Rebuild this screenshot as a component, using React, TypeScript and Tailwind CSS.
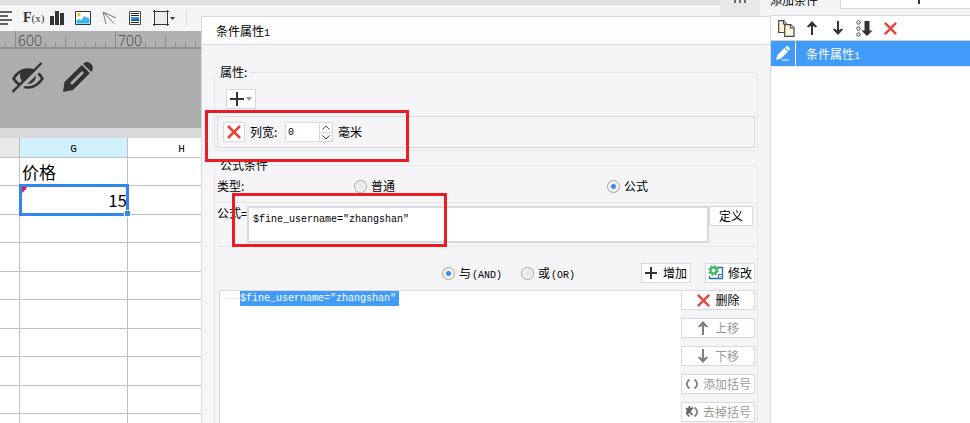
import React, { useState } from 'react';

const CJK = "font-['Noto_Sans_CJK_SC',sans-serif]";
const MONO = "font-['Liberation_Mono',monospace] text-[10px]";

function Cross({ size = 16 }: { size?: number }) {
  return (
    <svg width={size} height={size} viewBox="0 0 16 16" fill="none" stroke="#e8443a" strokeWidth="2.6" aria-hidden="true">
      <path d="M2 2 14 14M14 2 2 14" />
    </svg>
  );
}

function Plus() {
  return (
    <svg width="14" height="14" viewBox="0 0 14 14" stroke="#333" strokeWidth="2" aria-hidden="true">
      <path d="M7 0V14M0 7H14" />
    </svg>
  );
}

function Arrow({ down = false, color = '#333' }: { down?: boolean; color?: string }) {
  return (
    <svg width="12" height="14" viewBox="0 0 12 14" aria-hidden="true" className={down ? 'rotate-180' : ''}>
      <path d="M6 2V14" stroke={color} strokeWidth="2" />
      <path d="M6 0 11 5.500 10 6.500 6 4.500 2 6.500 1 5.500Z" fill={color} />
    </svg>
  );
}

function EditIcon() {
  return (
    <svg width="16" height="16" viewBox="0 0 16 16" fill="none" aria-hidden="true" className="shrink-0">
      <path d="M9 2.500H14.500V13.500H1.500V11" stroke="#1a6fb5" strokeWidth="1.300" />
      <path d="M10.500 9.500h4v4h-4z" fill="#fff" stroke="#1a6fb5" />
      <path d="M12 12.500 13.500 11" stroke="#1a6fb5" />
      <circle cx="5.500" cy="5.500" r="3" fill="#f5f5f7" stroke="#35b558" strokeWidth="2" />
      <circle cx="5.500" cy="5.500" r="4.600" stroke="#35b558" strokeWidth="1.500" strokeDasharray="1.900 1.710" />
    </svg>
  );
}

function Brackets({ struck = false }: { struck?: boolean }) {
  return (
    <svg width="14" height="12" viewBox="0 0 14 12" fill="none" stroke="#808080" strokeWidth="1.800" aria-hidden="true" className="shrink-0">
      <path d="M4.500 1.500C1 4 1 8 4.500 10.500M9.500 1.500C13 4 13 8 9.500 10.500" />
      {struck && <path d="M1 2 7.500 9M8 1.500 1.500 8M4.500 0V5" stroke="#606060" />}
    </svg>
  );
}

function DesignerToolbar() {
  return (
    <div className="flex h-[26px] shrink-0 items-center gap-[11px] bg-[#f5f5f7]">
      <svg width="12" height="15" viewBox="0 0 12 15" stroke="#333" strokeWidth="1.6" className="shrink-0">
        <path d="M0 1H12M0 5H8M0 9H12M0 13H8" />
      </svg>
      <span className="w-4 shrink-0 font-['Liberation_Serif',serif] text-[14px] leading-4 font-bold whitespace-nowrap text-[#333]">
        F<span className="text-[11px] font-normal">(x)</span>
      </span>
      <svg width="14" height="14" viewBox="0 0 14 14" fill="#333" className="shrink-0">
        <path d="M0 5h4v9H0zM5 0h4v14H5zM10 2h4v12h-4z" />
      </svg>
      <svg width="16" height="14" viewBox="0 0 16 14" className="shrink-0">
        <path d="M.5.5h15v13H.5z" fill="#fff" stroke="#333" />
        <circle cx="4" cy="3.8" r="1.8" fill="#f7b63c" />
        <path d="M1.5 12.5V9.5L4 8l2 1.5L9.5 5l2 2L13 6l1.5 2.5v4z" fill="#37b6f0" />
      </svg>
      <svg width="16" height="14" viewBox="0 0 16 14" fill="none" stroke="#777" className="shrink-0">
        <path d="M12 12.500 1 1l3 12M1 1l13 6" />
      </svg>
      <svg width="13" height="14" viewBox="0 0 13 14" fill="none" className="shrink-0">
        <path d="M.5.5h11v13H.5z" fill="#fff" stroke="#444" />
        <path d="M2 2.5h8M2 4.5h8M2 11.5h8" stroke="#222" />
        <path d="M2 6h8v4H2z" fill="#2f9bea" />
        <path d="M2 10 5 8l2 1 2-2 1 3z" fill="#134d86" />
      </svg>
      <svg width="22" height="16" viewBox="0 0 22 16" fill="none" className="shrink-0">
        <path d="M1.500 1.500h13v13h-13z" fill="#ececee" />
        <path d="M1.500 0V16M14.500 0V16M0 1.500H16M0 14.500H16" stroke="#333" />
        <path d="M17 7h5l-2.500 3z" fill="#333" />
      </svg>
      <span className="h-4 w-px shrink-0 bg-[#d9d9dd]" />
    </div>
  );
}

const TICKS = [5, 45, 55, 65, 75, 85, 95, 105, 145, 155, 165, 175, 185, 195];

function Ruler() {
  return (
    <svg width="201" height="18" viewBox="0 0 201 18" className="block shrink-0 bg-[#b0b0b0]">
      {TICKS.map((x) => (
        <path key={x} d={`M${x}.5 ${x % 100 === 65 ? 5 : 11}V16`} stroke="#8c8c8c" />
      ))}
      <path d="M15.5 0V16M115.5 0V16" stroke="#8c8c8c" />
      <path d="M0 17H201" stroke="#8f8f8f" strokeWidth="2" />
      <text x="18" y="15" fontSize="14" fill="#444" className="font-['Open_Sans',sans-serif] font-light">600</text>
      <text x="118" y="15" fontSize="14" fill="#444" className="font-['Open_Sans',sans-serif] font-light">700</text>
    </svg>
  );
}

function CanvasIcons() {
  return (
    <div className="flex h-[79px] shrink-0 gap-[19px] bg-[#acadaf] pt-[13px] pl-3">
      <svg width="32" height="32" viewBox="0 0 32 32" fill="none">
        <path d="M1.5 16.500C6 9 11 7.500 16 7.500S26 9 30.500 16.500C26 23.500 21 25.500 16 25.500S6 23.500 1.500 16.500Z" stroke="#333" strokeWidth="2.600" />
        <path d="M8 13C8 8 11 7 16 7s8 1 8 6c0 6-4 9-8 9s-8-3-8-9Z" fill="#333" />
        <path d="M2.500 31.500 32 3" stroke="#acadaf" strokeWidth="4" />
        <path d="M.5 30 29.500 1" stroke="#333" strokeWidth="2.400" />
      </svg>
      <svg width="30" height="31" viewBox="0 0 30 31" fill="#333">
        <path d="M0 30 1.500 20 19 2.800 27 11 10 28Z" />
        <path d="M20 2C23-1 26 0 28 2s3 5 0 8z" />
        <path d="M19.500 2.500 27.500 10.500" stroke="#acadaf" strokeWidth="1.500" />
        <path d="M7 21 19 9l2 2L9 23Z" fill="#acadaf" />
      </svg>
    </div>
  );
}

function Sheet() {
  const cell = 'border-r border-b border-[#c0c0c0] p-0';
  return (
    <table className="w-[236px] shrink-0 table-fixed border-separate border-spacing-0 bg-white text-black">
      <colgroup>
        <col className="w-5" />
        <col className="w-[108px]" />
        <col className="w-[108px]" />
      </colgroup>
      <thead>
        <tr className="h-5 font-['Liberation_Mono',monospace] text-[11px] leading-4">
          <td className={`${cell} bg-[#e8e8e8]`} />
          <th scope="col" className="border-r border-b border-[#c0c0c0] bg-[#d0f0fb] p-0 pt-[3px] font-normal">G</th>
          <th scope="col" className="border-r border-b border-[#c0c0c0] p-0 pt-[3px] font-normal">H</th>
        </tr>
      </thead>
      <tbody className="text-[17px] leading-6">
        <tr className="h-7">
          <td className={cell} />
          <td className={`${cell} pl-[2px]`}>价格</td>
          <td className={cell} />
        </tr>
        <tr className="h-[29px]">
          <td className={cell} />
          <td className={`${cell} relative text-right`}>
            15
            <svg width="8" height="8" className="absolute top-0 left-0" aria-hidden="true">
              <path d="M2 2H7L2 7Z" fill="#f5124a" />
            </svg>
            <span className="absolute -top-[2px] -right-[2px] -bottom-[2px] -left-px border-3 border-[#3385f0]" />
            <svg width="8" height="8" className="absolute top-px left-[2px]" aria-hidden="true">
              <path d="M0 0H5L0 5Z" fill="#f5124a" />
            </svg>
            <span className="absolute -right-[4px] -bottom-[3px] size-[7px] border border-white bg-[#3385f0]" />
          </td>
          <td className={cell} />
        </tr>
        {[0, 1, 2, 3, 4, 5, 6, 7].map((i) => (
          <tr key={i} className={i % 2 ? 'h-[29px]' : 'h-7'}>
            <td className={cell} />
            <td className={cell} />
            <td className={cell} />
          </tr>
        ))}
      </tbody>
    </table>
  );
}

function Radio({ name, label, latin, checked, onPick }: { name: string; label: string; latin?: string; checked: boolean; onPick: () => void }) {
  return (
    <label className="flex items-center gap-1 whitespace-nowrap">
      <input
        type="radio"
        name={name}
        checked={checked}
        onChange={onPick}
        className="size-[13px] shrink-0 appearance-none rounded-full border border-[#a8a8a8] bg-[#ececec] bg-[radial-gradient(circle,#e4e4e4,#fafafa)] checked:bg-[radial-gradient(circle,#3c8cf0_0,#3c8cf0_2px,#f2f2f2_3px)]"
      />
      <span>
        {label}
        {latin && <span className={`${MONO} ml-px leading-none`}>{latin}</span>}
      </span>
    </label>
  );
}

const BTN = 'flex h-5 items-center justify-center border border-[#d9d9dd] bg-white whitespace-nowrap';

function Dialog() {
  const [kind, setKind] = useState('formula');
  const [join, setJoin] = useState('and');
  const [width, setWidth] = useState(0);
  const [formula, setFormula] = useState('$fine_username="zhangshan"');
  return (
    <section className="relative flex min-h-0 flex-1 flex-col overflow-hidden border-t border-l border-[#d9d9dd] bg-[#f5f5f7]">
      <h1 className="h-7 shrink-0 border-b border-[#d9d9dd] bg-[#fdfdfd] pl-[14px] leading-[27px]">
        条件属性<span className={`${MONO} leading-none`}>1</span>
      </h1>
      <div className="flex min-h-0 flex-1 flex-col px-3 pt-[19px]">
        <fieldset className="min-w-0 shrink-0 rounded-[5px] border border-[#e6e6e9] px-[2px] pb-[2px]">
          <legend className="ml-px px-[2px] leading-4">属性:</legend>
          <button type="button" aria-label="添加属性" className={`${BTN} mt-[9px] ml-[9px] w-[30px] gap-[2px]`}>
            <Plus />
            <svg width="6" height="4" aria-hidden="true"><path d="M0 0H6L3 4Z" fill="#999" /></svg>
          </button>
          <div className="mt-[7px] flex h-8 items-center border border-[#d9d9dd] pl-[5px]">
            <button type="button" aria-label="删除列宽" className={`${BTN} w-[22px]`}><Cross /></button>
            <label htmlFor="col-width" className="w-10 pl-[5px] whitespace-nowrap">列宽:</label>
            <input
              id="col-width"
              inputMode="numeric"
              value={width}
              onChange={(e) => setWidth(Number(e.target.value) || 0)}
              className={`${MONO} h-5 w-[35px] border border-[#d9d9dd] bg-white pl-[2px]`}
            />
            <span className="flex h-5 w-[13px] flex-col border-y border-r border-[#d9d9dd]">
              <button type="button" aria-label="增大" onClick={() => setWidth(width + 1)} className="flex h-[9px] items-center justify-center bg-white">
                <svg width="8" height="5" fill="none" stroke="#444"><path d="M.5 4.5 4 1l3.5 3.5" /></svg>
              </button>
              <button type="button" aria-label="减小" onClick={() => setWidth(Math.max(0, width - 1))} className="flex h-[9px] items-center justify-center border-t border-[#d9d9dd]">
                <svg width="8" height="5" fill="none" stroke="#444"><path d="M.5.5 4 4 7.5.5" /></svg>
              </button>
            </span>
            <span className="pl-[5px]">毫米</span>
          </div>
        </fieldset>

        <fieldset className="mt-[6px] flex min-h-0 min-w-0 flex-1 flex-col rounded-t-[5px] border border-b-0 border-[#e6e6e9] px-[2px]">
          <legend className="ml-px px-[2px] leading-4">公式条件</legend>
          <div className="grid h-[30px] shrink-0 grid-cols-[137px_253px_1fr] items-center border-b border-[#e6e6e9] pb-[3px]">
            <span>类型:</span>
            <Radio name="kind" label="普通" checked={kind === 'normal'} onPick={() => setKind('normal')} />
            <Radio name="kind" label="公式" checked={kind === 'formula'} onPick={() => setKind('formula')} />
          </div>
          <div className="flex h-11 shrink-0 items-start border-b border-[#e6e6e9] py-[3px] pr-[2px]">
            <label htmlFor="formula" className="w-[30px] leading-[14px] whitespace-nowrap">公式<span className={`${MONO} leading-none`}>=</span></label>
            <textarea
              id="formula"
              value={formula}
              onChange={(e) => setFormula(e.target.value)}
              spellCheck={false}
              className={`${MONO} h-[37px] min-w-0 flex-1 resize-none border-2 border-[#d9d9dd] bg-white px-1 pt-[6px] leading-3`}
            />
            <button type="button" className={`${BTN} w-11`}>定义</button>
          </div>
          <div className="flex h-[43px] shrink-0 items-start justify-end pt-4">
            <div className="flex h-5 items-center">
              <div className="w-[79px]">
                <Radio name="join" label="与" latin="(AND)" checked={join === 'and'} onPick={() => setJoin('and')} />
              </div>
              <div className="w-[120px]">
                <Radio name="join" label="或" latin="(OR)" checked={join === 'or'} onPick={() => setJoin('or')} />
              </div>
            </div>
            <button type="button" className={`${BTN} w-[50px] gap-[6px]`}>
              <svg width="12" height="12" viewBox="0 0 12 12" stroke="#333" strokeWidth="2" className="shrink-0"><path d="M6 0V12M0 6H12" /></svg>
              增加
            </button>
            <button type="button" className={`${BTN} ml-[14px] w-[50px] gap-1`}><EditIcon />修改</button>
          </div>
          <div className="flex min-h-0 flex-1">
            <ul className="ml-[2px] min-w-0 flex-1 border-t border-l border-[#d9d9dd] bg-white">
              <li className={`${MONO} flex h-[15px] items-center gap-[3px] pl-[7px]`}>
                <span className="h-px w-[10px] bg-[#e8e8ea]" />
                <span className="h-[15px] w-[159px] bg-[#419bf9] leading-[15px] text-white">$fine_username="zhangshan"</span>
              </li>
            </ul>
            <div className="flex w-[74px] shrink-0 flex-col gap-2">
              <button type="button" className={`${BTN} shrink-0 gap-1`}><Cross size={15} />删除</button>
              <button type="button" disabled className={`${BTN} shrink-0 gap-[6px] text-[#999]`}><Arrow color="#808080" />上移</button>
              <button type="button" disabled className={`${BTN} shrink-0 gap-[6px] text-[#999]`}><Arrow down color="#808080" />下移</button>
              <button type="button" disabled className={`${BTN} shrink-0 gap-1 text-[#999]`}><Brackets />添加括号</button>
              <button type="button" disabled className={`${BTN} shrink-0 gap-1 text-[#999]`}><Brackets struck />去掉括号</button>
            </div>
          </div>
        </fieldset>
      </div>
      <span className="pointer-events-none absolute top-[93px] left-[3px] h-[52px] w-[204px] border-3 border-[#ed1c24]" />
      <span className="pointer-events-none absolute top-[176px] left-[30px] h-[54px] w-[215px] border-3 border-[#ed1c24]" />
    </section>
  );
}

function ConditionPane() {
  return (
    <aside className="flex w-[200px] shrink-0 flex-col bg-[#f5f5f7]">
      <div className="flex h-[15px] shrink-0 items-start">
        <h2 className="flex h-[7px] w-[70px] items-end overflow-hidden leading-[14px]">添加条件</h2>
        <div className="flex h-[9px] flex-1 justify-center border-b border-l border-[#d9d9dd] bg-white pl-[26px]">
          <span className="h-1 w-[2px] bg-[#333]" />
        </div>
      </div>
      <div className="flex min-h-0 flex-1 flex-col border-t border-l border-[#d9d9dd] bg-white">
        <div className="flex h-[25px] shrink-0 items-center border-b border-[#d0d0d4] pl-[7px]">
          <button type="button" aria-label="复制" className="w-7">
            <svg width="17" height="17" viewBox="0 0 17 17" fill="#fff6df" stroke="#444" strokeWidth="1.2">
              <path d="M.7.7h5L8.5 4v8.5H.7z" />
              <path d="M6.7 4.7h6l3.3 3v8.6H6.7z" />
              <path d="M5.5.7V4h3M12.5 4.7V8H16" fill="#fff" />
            </svg>
          </button>
          <button type="button" aria-label="上移" className="w-[26px]"><Arrow /></button>
          <button type="button" aria-label="下移" className="w-6"><Arrow down /></button>
          <button type="button" aria-label="置底" className="w-[27px]">
            <svg width="17" height="17" viewBox="0 0 17 17" fill="none">
              <g stroke="#444"><circle cx="2.500" cy="2.500" r="1.700" /><circle cx="2.500" cy="8.500" r="1.700" /><circle cx="2.500" cy="14.500" r="1.700" /></g>
              <path d="M8.5 1h5v9.500H16.500L11 16 5.500 10.500h3z" fill="#333" />
            </svg>
          </button>
          <button type="button" aria-label="删除"><Cross size={15} /></button>
        </div>
        <div className="flex h-[25px] shrink-0 items-center bg-[#419bf9] text-white">
          <button type="button" aria-label="编辑" className="flex h-full w-[25px] items-center justify-center border-r border-white">
            <svg width="14" height="15" viewBox="0 0 14 15" fill="#fff">
              <path d="M0 14 1.500 9 8.500 2l3.500 3.500L5 12.500Z" />
              <path d="M9.200 1.400 10.500 0C12 0 14 2 14 3.500L12.700 4.800Z" />
              <path d="M6 13.500h7v1H5z" />
            </svg>
          </button>
          <span className="pl-[10px]">条件属性<span className={`${MONO} leading-none`}>1</span></span>
        </div>
        <div className="h-px shrink-0 bg-[#e8e8ea]" />
      </div>
    </aside>
  );
}

export default function App() {
  return (
    <main className={`flex h-screen min-w-[760px] overflow-hidden bg-white text-[12px] leading-4 text-black ${CJK}`}>
      <div className="flex w-[201px] shrink-0 flex-col overflow-hidden">
        <div className="h-[5px] shrink-0 bg-[#e0e0e2]" />
        <DesignerToolbar />
        <Ruler />
        <CanvasIcons />
        <div className="h-[10px] shrink-0 bg-[#d9d9db]" />
        <Sheet />
      </div>
      <div className="flex min-w-0 flex-1 flex-col">
        <div className="flex h-4 shrink-0 bg-[#f5f5f7]">
          <div className="h-[5px] flex-1 bg-[#e0e0e2]" />
          <div className="mr-[10px] flex w-10 justify-center gap-[3px] bg-[#e8e8e9]">
            <span className="h-[3px] w-[2px] bg-[#667]" />
            <span className="h-[3px] w-[2px] bg-[#667]" />
            <span className="h-[3px] w-[2px] bg-[#667]" />
          </div>
        </div>
        <Dialog />
      </div>
      <ConditionPane />
    </main>
  );
}
